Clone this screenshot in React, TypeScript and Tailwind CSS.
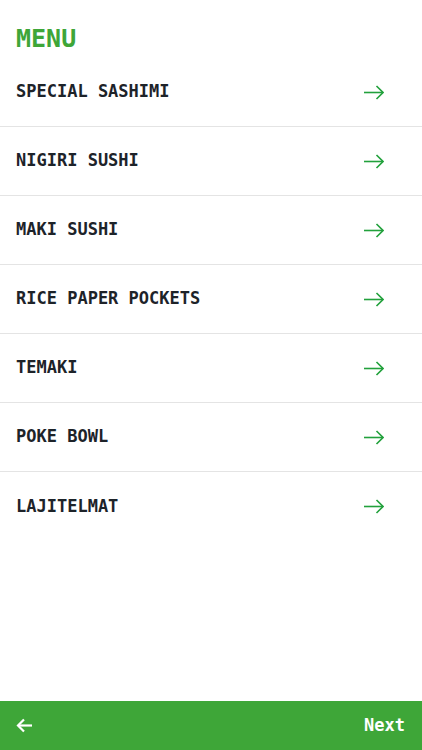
const items = [
  'SPECIAL SASHIMI',
  'NIGIRI SUSHI',
  'MAKI SUSHI',
  'RICE PAPER POCKETS',
  'TEMAKI',
  'POKE BOWL',
  'LAJITELMAT',
];

function ArrowRight() {
  return (
    <svg width="20" height="15" viewBox="0 0 20 15" fill="none" stroke="#22a13c" strokeWidth="1.6" aria-hidden="true">
      <path d="M0 7.5H19" />
      <path d="M12.5 1L19 7.5L12.5 14" />
    </svg>
  );
}

function ArrowLeft() {
  return (
    <svg width="17" height="15" viewBox="0 0 17 15" fill="none" stroke="#ffffff" strokeWidth="2.2" aria-hidden="true">
      <path d="M16 7.5H2" />
      <path d="M8 1.5L2 7.5L8 13.5" />
    </svg>
  );
}

export default function App() {
  return (
    <div className="flex h-screen flex-col bg-white font-['DejaVu_Sans_Mono',monospace]">
      <header className="h-[58px] pl-4 pt-[26px]">
        <h1 className="text-[25px] font-bold leading-none text-[#3ea638]">MENU</h1>
      </header>

      <ul className="flex-1">
        {items.map((item, i) => (
          <li
            key={item}
            className={`flex h-[69px] items-center justify-between pl-4 pr-[38px] ${
              i < items.length - 1 ? 'border-b border-[#e4e4e4]' : ''
            }`}
          >
            <span className="text-[17px] font-bold text-[#1d2329]">{item}</span>
            <ArrowRight />
          </li>
        ))}
      </ul>

      <footer className="flex h-[49px] items-center justify-between bg-[#3ea638] pl-4 pr-[17px]">
        <ArrowLeft />
        <span className="text-[17px] font-bold text-white">Next</span>
      </footer>
    </div>
  );
}
